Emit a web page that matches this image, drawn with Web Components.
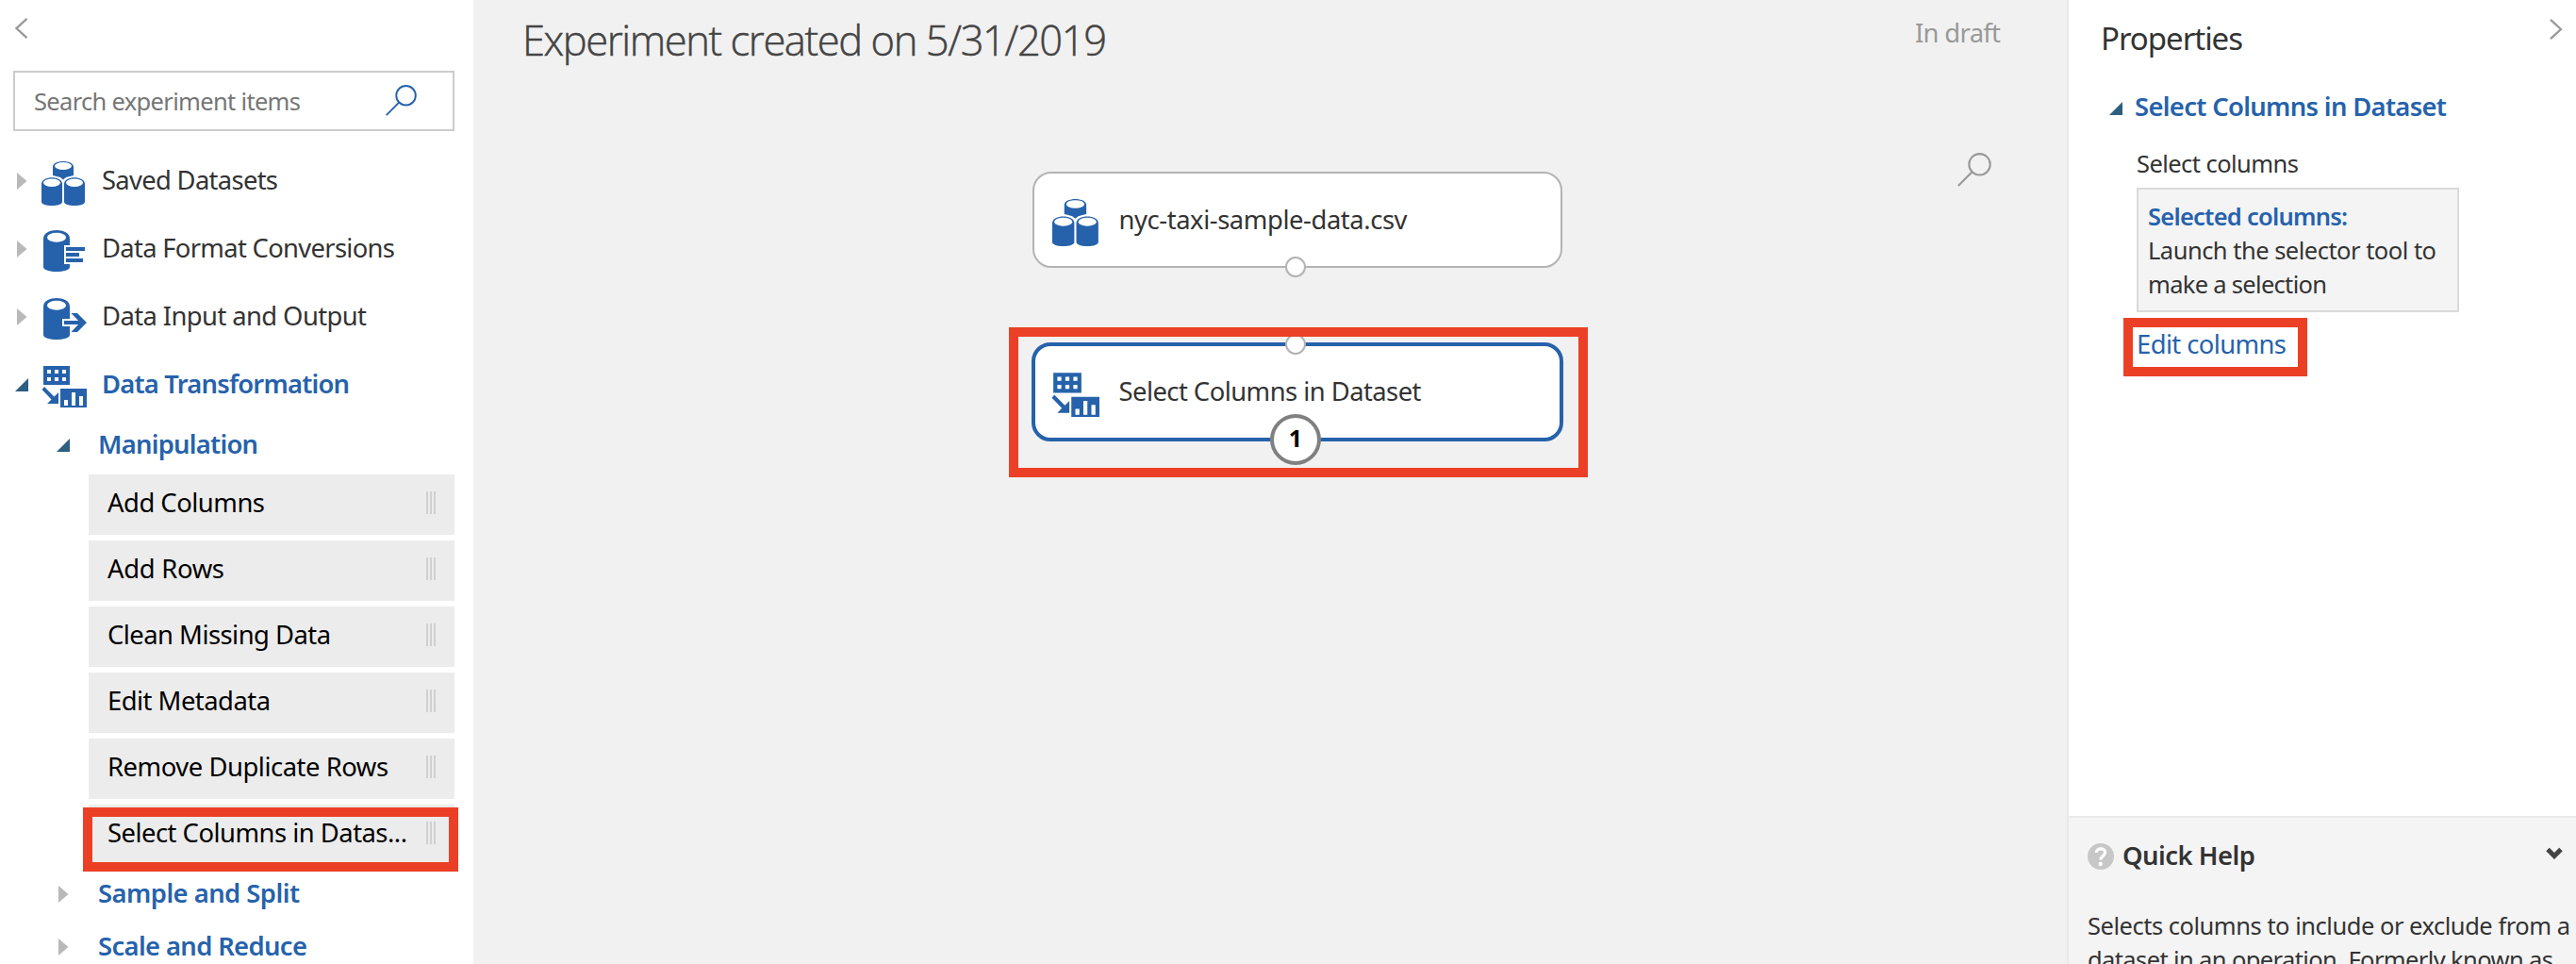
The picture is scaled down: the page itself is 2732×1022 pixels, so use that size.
<!DOCTYPE html>
<html lang="en">
<head>
<meta charset="utf-8">
<title>Experiment</title>
<style>
html,body{margin:0;height:100%;overflow:hidden}
body{font-family:"Noto Sans","Open Sans",sans-serif;color:#333;background:#f1f1f1}
studio-app{height:1022px}
</style>
</head>
<body>
<studio-app></studio-app>
<script>
const define=(name,html,setup)=>customElements.define(name,class extends HTMLElement{
  connectedCallback(){
    if(this.shadowRoot)return;
    const t=document.createElement('template');
    t.innerHTML=typeof html==='function'?html(this):html;
    this.attachShadow({mode:'open'}).append(t.content.cloneNode(true));
    if(setup)setup(this);
  }
});

/* One line of text whose tracking is set so that it takes the width w */
define('ui-text',el=>`<style>
:host{display:block;flex:none;white-space:pre;font-size:${el.getAttribute('size')||27.4}px;line-height:${el.getAttribute('lh')||36}px;width:${el.getAttribute('w')}px}
span{display:inline-block}</style><span><slot></slot></span>`,el=>{
  const s=el.shadowRoot.querySelector('span');
  const n=el.textContent.length-1;
  const gap=(+el.getAttribute('w')-1-s.getBoundingClientRect().width)/n;
  s.style.letterSpacing=gap.toFixed(3)+'px';
});

const B='#2662ab';
const icons={
datasets:`<g fill="${B}"><path d="M12 7C12-1 34-1 34 7V16Q30 17 26 18L23 20.500L20 18Q16 17 12 16Z"/><path d="M0 25C0 16 22 16 22 25V44C22 49.300 0 49.300 0 44Z"/><path d="M24 25C24 16 46 16 46 25V44C46 49.300 24 49.300 24 44Z"/></g><g fill="#fff"><ellipse cx="23" cy="6" rx="9" ry="4"/><ellipse cx="11" cy="23.700" rx="9" ry="4.200"/><ellipse cx="35" cy="23.700" rx="9" ry="4.200"/></g>`,
format:`<path fill="${B}" d="M2 11C2-1 30-1 30 11V41C30 47.700 2 47.700 2 41Z"/><ellipse fill="#fff" cx="16" cy="9.700" rx="10" ry="5"/><path fill="#fff" d="M24 18H48V38H24Z"/><path fill="${B}" d="M26 20H46V24H26ZM26 26H40V30H26ZM26 32H44V36H26Z"/>`,
io:`<path fill="${B}" d="M2 11C2-1 30-1 30 11V41C30 47.700 2 47.700 2 41Z"/><ellipse fill="#fff" cx="16" cy="9.700" rx="10" ry="5"/><path fill="#fff" d="M22 24H34V32H22Z"/><path fill="${B}" d="M24 26H39L31.500 18H38L48 28L38 38H31.500L39 30H24Z"/>`,
transform:`<path fill="${B}" d="M2 2H30V22H2ZM20 26H48V46H20Z"/><path fill="#fff" d="M6 6h4v4h-4zM14 6h4v4h-4zM22 6h4v4h-4zM6 14h4v4h-4zM14 14h4v4h-4zM22 14h4v4h-4zM24 38h4v6h-4zM32 30h4v14h-4zM40 34h4v10h-4z"/><path fill="${B}" d="M3 24L13.500 34.500L18 30V42H6L10.500 37.500L.5 27Z"/>`
};
define('mod-icon',el=>`<style>:host{display:block;flex:none}svg{display:block}</style><svg width="${el.getAttribute('size')||48}" height="${el.getAttribute('size')||48}" viewBox="0 0 48 48">${icons[el.getAttribute('name')]}</svg>`);

define('tree-arrow',el=>`<style>:host{display:block;flex:none}svg{display:block}</style><svg width="14" height="18" viewBox="0 0 14 18">${el.hasAttribute('open')?'<path d="M0 16L14 2V16Z" fill="#2d5f80"/>':'<path d="M2 0L12.500 9L2 18Z" fill="#b9b9b9"/>'}</svg>`);

define('magnifier-icon',el=>`<style>:host{display:block;flex:none}svg{display:block}</style><svg width="${el.getAttribute('size')}" height="${el.getAttribute('size')}" viewBox="0 0 36 36" fill="none" stroke="${el.getAttribute('color')}" stroke-width="2.100"><circle cx="23.500" cy="12.300" r="11.200"/><path d="M15.500 20.300L.8 35"/></svg>`);

define('chevron-icon',el=>`<style>:host{display:block;flex:none}svg{display:block}</style><svg width="14" height="22" viewBox="0 0 14 22" fill="none" stroke="#999" stroke-width="2.300"><path d="${el.hasAttribute('right')?'M1 .8L12 11L1 21.200':'M12.500 .8L1.500 11L12.500 21.200'}"/></svg>`);

define('search-box',`<style>
:host{display:flex;flex:none;box-sizing:border-box;width:468px;height:64px;border:2px solid #ccc;background:#fff;align-items:center;justify-content:space-between;padding:0 38px 0 20px;color:#767676}
magnifier-icon{margin-top:-1px}</style>
<ui-text size="25.5" w="284">Search experiment items</ui-text><magnifier-icon size="33" color="#2662ab"></magnifier-icon>`);

define('tree-row',`<style>
:host{display:flex;height:72px;align-items:center;padding-left:16px}
:host([sub]){height:56px;padding-left:60px;color:#2662ab;font-weight:600}
:host([sub][first]){height:55px}
:host([active]){color:#2662ab;font-weight:600}
tree-arrow{margin:4px 14px 0 0}
:host([sub]) tree-arrow{margin-right:30px}
.icon{width:64px;margin-top:8px}
::slotted(ui-text){margin-top:2px}
:host([sub]) .icon{display:none}</style>
<span class="arrow"></span><div class="icon"><slot name="icon"></slot></div><slot></slot>`,el=>{
  const a=document.createElement('tree-arrow');
  if(el.hasAttribute('open'))a.setAttribute('open','');
  el.shadowRoot.querySelector('.arrow').replaceWith(a);
});

define('module-item',`<style>
:host{display:flex;box-sizing:border-box;width:388px;height:64px;background:#ececec;padding:0 19px 4px 20px;align-items:center;justify-content:space-between;color:#000}
svg{display:block}</style><slot></slot>
<svg width="12" height="24" fill="#d0d0d0"><path d="M1 0h2v24h-2zM5 0h2v24h-2zM9 0h2v24h-2z"/></svg>`);

/* Thick red frame that is drawn over the content it marks */
define('red-mark',el=>{const[x,y,w,h]=el.getAttribute('box').split(' ');return`<style>:host{position:absolute;box-sizing:border-box;left:${x}px;top:${y}px;width:${w}px;height:${h}px;border:10px solid #ec4026;z-index:3}</style>`});

define('side-bar',`<style>
:host{display:flex;flex-direction:column;width:502px;flex:none;background:#fff;overflow:hidden}
header{flex:none;padding:19px 0 34px 16px}
search-box{margin-left:14px}
nav{display:flex;flex:none;flex-direction:column;margin-top:15px}
.items{display:flex;flex-direction:column;gap:6px;margin:6px 0 1px 94px}
.last{position:relative}</style>
<header><chevron-icon></chevron-icon></header>
<search-box></search-box>
<nav>
<tree-row><mod-icon slot="icon" name="datasets"></mod-icon><ui-text w="188">Saved Datasets</ui-text></tree-row>
<tree-row><mod-icon slot="icon" name="format"></mod-icon><ui-text w="312">Data Format Conversions</ui-text></tree-row>
<tree-row><mod-icon slot="icon" name="io"></mod-icon><ui-text w="282">Data Input and Output</ui-text></tree-row>
<tree-row active open><mod-icon slot="icon" name="transform"></mod-icon><ui-text w="264">Data Transformation</ui-text></tree-row>
<tree-row sub first open><ui-text w="171">Manipulation</ui-text></tree-row>
<div class="items">
<module-item><ui-text w="168">Add Columns</ui-text></module-item>
<module-item><ui-text w="125">Add Rows</ui-text></module-item>
<module-item><ui-text w="238">Clean Missing Data</ui-text></module-item>
<module-item><ui-text w="174">Edit Metadata</ui-text></module-item>
<module-item><ui-text w="299">Remove Duplicate Rows</ui-text></module-item>
<div class="last"><module-item><ui-text w="319">Select Columns in Datas...</ui-text></module-item><red-mark box="-6 3 398 68"></red-mark></div>
</div>
<tree-row sub><ui-text w="215">Sample and Split</ui-text></tree-row>
<tree-row sub><ui-text w="223">Scale and Reduce</ui-text></tree-row>
</nav>`);

define('graph-node',el=>`<style>
:host{position:absolute;display:flex;align-items:center;box-sizing:border-box;left:${el.getAttribute('x')}px;top:${el.getAttribute('y')}px;width:562px;height:102px;border:2px solid #b3b3b3;border-radius:20px;background:#fff;padding-left:18.500px}
:host([selected]){width:564px;height:105px;border:4px solid #2662ab;padding-left:16.500px}
mod-icon{margin:5px 20px 0 0}
:host([selected]) mod-icon{margin:6px 21px 0 0}
::slotted(ui-text){margin-top:-1px}
i{position:absolute;box-sizing:border-box;width:22px;height:22px;border:2px solid #b3b3b3;border-radius:50%;background:#fff;left:266px}
.out{bottom:-12px}.in{top:-13px;left:265px}
b{position:absolute;box-sizing:border-box;left:249px;bottom:-29px;width:54px;height:54px;border:4px solid #808080;border-radius:50%;background:#fff;color:#000;font:bold 25px/43px "Noto Sans",sans-serif;text-align:center}</style>
<mod-icon size="51" name="${el.getAttribute('icon')}"></mod-icon><slot></slot>${el.hasAttribute('selected')?'<i class="in"></i><b>1</b>':'<i class="out"></i>'}`);

define('experiment-canvas',`<style>
:host{display:block;position:relative;flex:1;background:#f1f1f1;overflow:hidden}
header{display:flex;justify-content:space-between;height:85px;padding:0 69px 0 52px;color:#444}
.title{font-family:"Open Sans","Noto Sans",sans-serif;font-weight:300;-webkit-text-stroke:.5px #444}
.draft{color:#999}
.find{display:flex;justify-content:flex-end;padding:77px 80px 0 0}</style>
<header><ui-text class="title" size="43.5" lh="86" w="621">Experiment created on 5/31/2019</ui-text><ui-text class="draft" lh="70" w="92">In draft</ui-text></header>
<div class="find"><magnifier-icon size="36" color="#999"></magnifier-icon></div>
<graph-node x="593" y="182" icon="datasets"><ui-text w="307">nyc-taxi-sample-data.csv</ui-text></graph-node>
<graph-node x="592" y="363" icon="transform" selected><ui-text w="322">Select Columns in Dataset</ui-text></graph-node>
<red-mark box="568 347 614 159"></red-mark>`);

define('selected-columns',`<style>
:host{display:block;box-sizing:border-box;width:342px;height:132px;border:2px solid #dadada;background:#f4f4f4;padding:10px 0 0 10px}
.h{color:#2662ab;font-weight:600}</style>
<ui-text class="h" size="25.5" w="213">Selected columns:</ui-text><ui-text size="25.5" w="307">Launch the selector tool to</ui-text><ui-text size="25.5" w="191">make a selection</ui-text>`);

define('quick-help',`<style>
:host{display:block;height:157px;box-sizing:border-box;border-top:2px solid #eaeaea;background:#f4f4f4;padding:21px 0 0 20px;overflow:hidden}
header{display:flex;align-items:center;height:38px;font-weight:600}
.q{display:block;margin:1px 9px 0 0}
.v{display:block;margin:-5px 14px 0 auto}
.body{margin-top:37px}</style>
<header><svg class="q" width="28" height="28"><circle cx="14" cy="14" r="14" fill="#c7c7c7"/><path d="M9.300 10C9.300 4.700 18.600 4.600 18.600 9.800C18.600 13 14 13.500 13.800 17.500" fill="none" stroke="#fff" stroke-width="3.200"/><circle cx="13.700" cy="22" r="2.200" fill="#fff"/></svg><ui-text w="142">Quick Help</ui-text><svg class="v" width="18" height="13"><path d="M2 2.500L9 9.500L16 2.500" fill="none" stroke="#444" stroke-width="5"/></svg></header>
<div class="body"><ui-text size="25.5" w="513">Selects columns to include or exclude from a</ui-text><ui-text size="25.5" w="495">dataset in an operation. Formerly known as</ui-text></div>`);

define('properties-panel',`<style>
:host{display:flex;flex-direction:column;justify-content:space-between;box-sizing:border-box;width:540px;flex:none;border-left:2px solid #eaeaea;background:#fff}
header{display:flex;justify-content:space-between;height:80px;padding:0 14px 0 34px}
chevron-icon{margin-top:20px}
.section{display:flex;align-items:center;height:40px;padding-left:43px;margin-top:13px;color:#2662ab;font-weight:600}
tree-arrow{margin:3px 13px 0 0}
.fields{padding:22px 0 0 72px}
.box{margin-top:8px}
.edit{position:relative;color:#2662ab;padding-top:16px}</style>
<div><header><ui-text size="33" lh="81" w="152">Properties</ui-text><chevron-icon right></chevron-icon></header>
<div class="section"><tree-arrow open></tree-arrow><ui-text w="332">Select Columns in Dataset</ui-text></div>
<div class="fields"><ui-text size="25.5" w="173">Select columns</ui-text><selected-columns class="box"></selected-columns>
<div class="edit"><ui-text w="160">Edit columns</ui-text><red-mark box="-14 6 195 62"></red-mark></div></div></div>
<quick-help></quick-help>`);

define('studio-app',`<style>:host{display:flex;width:2732px}</style><side-bar></side-bar><experiment-canvas></experiment-canvas><properties-panel></properties-panel>`);
</script>
</body>
</html>
